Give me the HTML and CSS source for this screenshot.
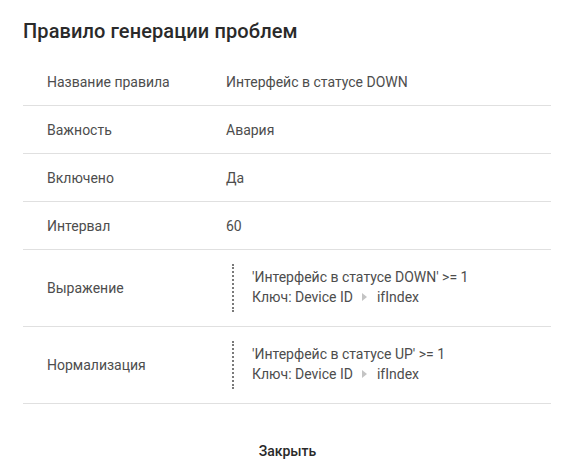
FILE: index.html
```html
<!DOCTYPE html>
<html lang="ru">
<head>
<meta charset="utf-8">
<link rel="stylesheet" href="styles.css">
</head>
<body>
<div class="dialog">
  <h2 class="title">Правило генерации проблем</h2>
  <table class="props">
    <tr><td class="label">Название правила</td><td class="value">Интерфейс в статусе DOWN</td></tr>
    <tr><td class="label">Важность</td><td class="value">Авария</td></tr>
    <tr><td class="label">Включено</td><td class="value">Да</td></tr>
    <tr><td class="label">Интервал</td><td class="value">60</td></tr>
    <tr class="tall"><td class="label">Выражение</td><td class="value">
      <div class="expr">
        <div>'Интерфейс в статусе DOWN' &gt;= 1</div>
        <div class="key">Ключ: Device ID <span class="arrow"></span> ifIndex</div>
      </div>
    </td></tr>
    <tr class="tall"><td class="label">Нормализация</td><td class="value">
      <div class="expr">
        <div>'Интерфейс в статусе UP' &gt;= 1</div>
        <div class="key">Ключ: Device ID <span class="arrow"></span> ifIndex</div>
      </div>
    </td></tr>
  </table>
  <div class="actions"><button class="btn">Закрыть</button></div>
</div>
</body>
</html>
```

FILE: styles.css
```css
html, body { margin: 0; padding: 0; background: #fff; }
body { font-family: Roboto, "Noto Sans", sans-serif; color: #212121; }
.dialog { padding: 0 23px; }
.title {
  margin: 0;
  padding-top: 15px;
  font-size: 20px;
  line-height: 32px;
  font-weight: 500;
  color: #2a2a2a;
  letter-spacing: 0.1px;
}
.props {
  margin-top: 11px;
  width: 100%;
  border-collapse: collapse;
  font-size: 14px;
  color: #4d4d4d;
}
.props td {
  height: 47px;
  padding: 0;
  border-bottom: 1px solid #e0e0e0;
  vertical-align: middle;
  line-height: 20px;
}
.props tr.tall td { height: 76px; }
.label { width: 179px; padding-left: 24px !important; }
.expr {
  margin-left: 6px;
  border-left: 2px dotted #7a7a7a;
  padding: 3px 0 5px 18px;
}
.key { display: flex; align-items: center; }
.arrow {
  display: inline-block;
  width: 0; height: 0;
  border-top: 4px solid transparent;
  border-bottom: 4px solid transparent;
  border-left: 5px solid #c4c4c4;
  margin: 0 10px 0 9px;
}
.actions { display: flex; justify-content: center; padding-top: 29px; }
.btn {
  font-family: Roboto, sans-serif;
  font-size: 14px;
  font-weight: 500;
  color: #2a2a2a;
  background: none;
  border: none;
  height: 36px;
  padding: 0 16px;
  margin-left: 1px;
}
```
